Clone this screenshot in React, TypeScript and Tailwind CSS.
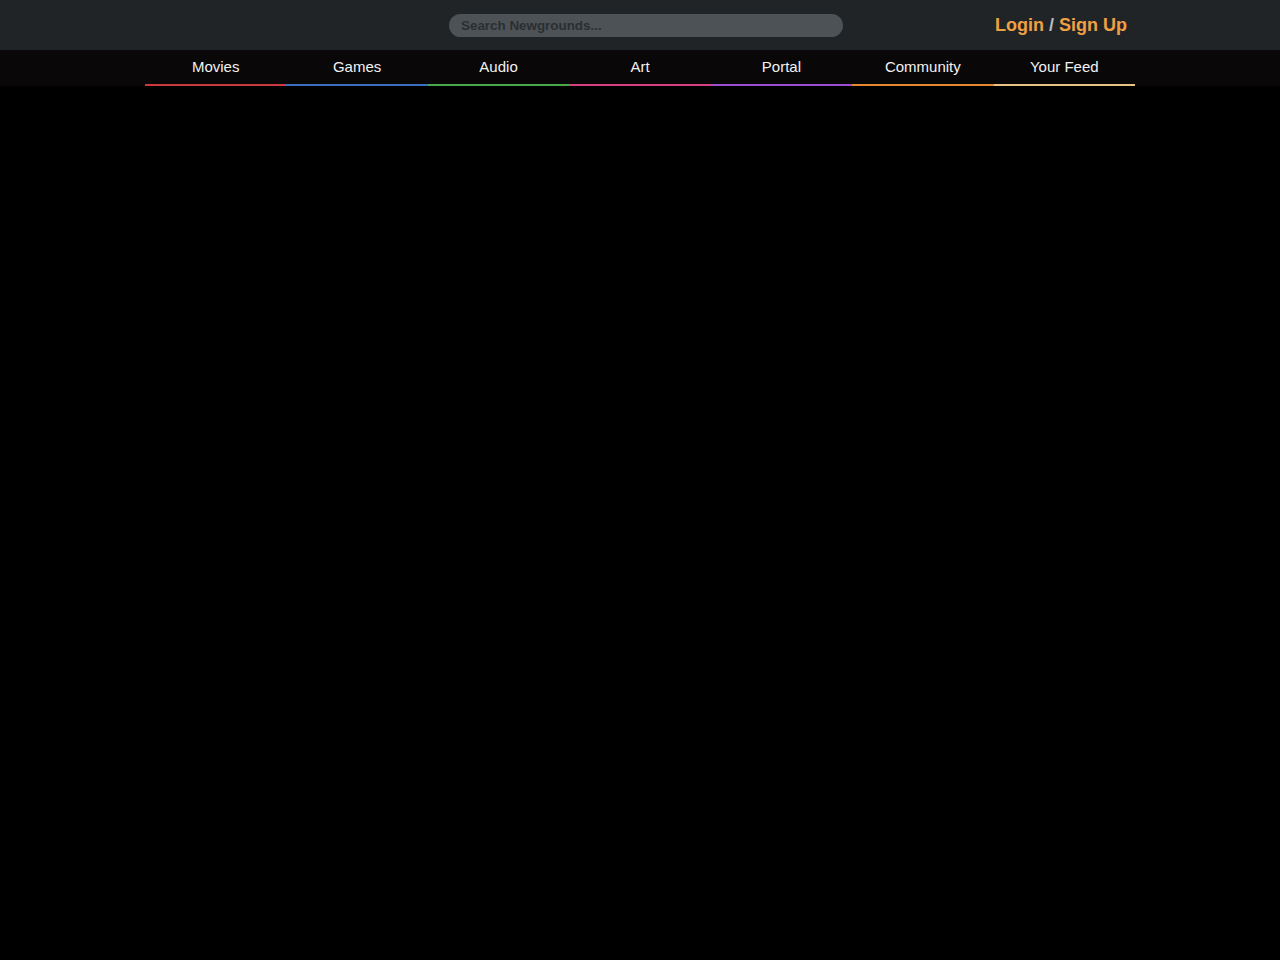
import React from "react";

const navItems = [
  { label: "Movies", bar: "bg-[#cc3a3f]" },
  { label: "Games", bar: "bg-[#3c6fc2]" },
  { label: "Audio", bar: "bg-[#4aa84a]" },
  { label: "Art", bar: "bg-[#d63f80]" },
  { label: "Portal", bar: "bg-[#9a4fcf]" },
  { label: "Community", bar: "bg-[#e6892e]" },
  { label: "Your Feed", bar: "bg-[#e9c286]" },
];

export default function App() {
  return (
    <div className="min-h-screen w-full bg-black font-['Liberation_Sans',Arial,sans-serif]">
      <header className="h-[50px] w-full bg-[#212427]">
        <div className="mx-auto flex h-full w-[990px] items-center">
          <div className="w-[304px]" />
          <input
            type="text"
            placeholder="Search Newgrounds..."
            className="h-[23px] w-[394px] rounded-full bg-[#4d5256] px-3 text-[13.4px] font-bold text-[#d9d9d9] outline-none placeholder:text-[#2b2e31]"
          />
          <div className="flex-1" />
          <div className="pr-2 text-[18px] font-bold text-[#efa043]">
            <a href="#">Login</a>
            <span className="text-[#b7bcc0]"> / </span>
            <a href="#">Sign Up</a>
          </div>
        </div>
      </header>

      <nav className="h-9 w-full bg-[#090707]">
        <ul className="mx-auto flex h-full w-[990px]">
          {navItems.map((item) => (
            <li key={item.label} className="flex flex-1 flex-col">
              <a
                href="#"
                className="flex flex-1 items-start justify-center pt-[6px] text-[15px] text-[#f2f2f2]"
              >
                {item.label}
              </a>
              <div className={`h-[2px] w-full ${item.bar}`} />
            </li>
          ))}
        </ul>
      </nav>
    </div>
  );
}
